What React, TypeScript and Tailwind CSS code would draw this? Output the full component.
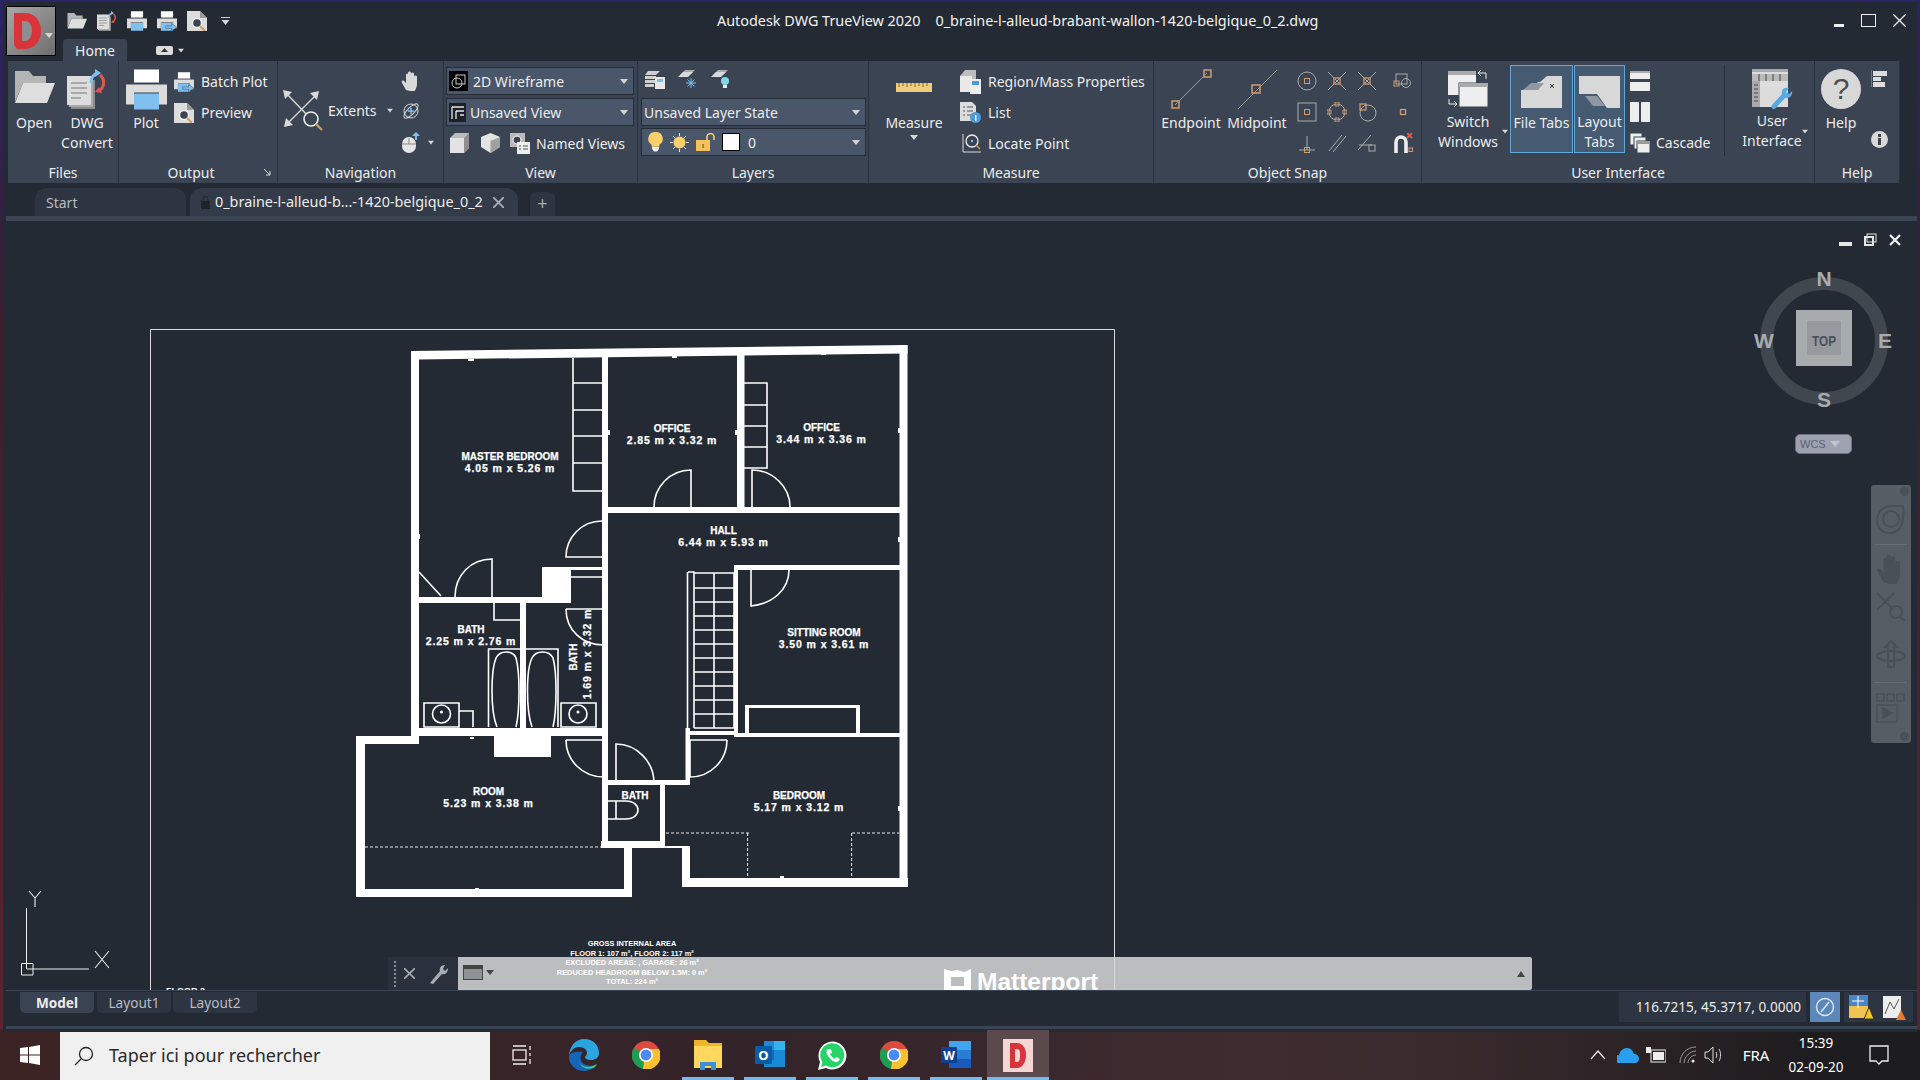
import React from 'react';

const G = '#d9d9d9';
const BL = '#7fc0f0';
const OR = '#d09a70';

const Caret = ({ className = '' }: { className?: string }) => (
  <svg width="8" height="5" viewBox="0 0 8 5" className={className}><path d="M0 0h8L4 5z" fill="#d5d5d5" /></svg>
);

const FolderIcon = ({ s = 41 }: { s?: number }) => (
  <svg width={s} height={s * 0.83} viewBox="0 0 41 34">
    <path d="M1 33V2h14l4 5h13v7H9L1 33z" fill="#b5b5b5" />
    <path d="M9 14h32l-8 20H1z" fill="#dedede" />
  </svg>
);

const PrinterIcon = ({ s = 41, arrow = false }: { s?: number; arrow?: boolean }) => (
  <svg width={s} height={s} viewBox="0 0 41 40">
    <rect x="8" y="0" width="25" height="13" fill="#fff" />
    <path d="M0 15h41v20H33V23H8v12H0z" fill="#dcdcdc" />
    <rect x="8" y="24" width="25" height="16" fill={BL} />
    {arrow && <path d="M18 30h12v-5l11 8-11 7v-5H18z" fill={BL} stroke="#3b4453" />}
  </svg>
);

const ConvertIcon = ({ s = 40 }: { s?: number }) => (
  <svg width={s} height={s} viewBox="0 0 40 40">
    <rect x="4" y="11" width="24" height="29" fill="#8c8c8c" />
    <rect x="2" y="9" width="24" height="29" fill="#aaa" />
    <rect x="0" y="7" width="24" height="29" fill="#dcdcdc" />
    <path d="M4 14h16M4 19h16M4 24h16M4 29h10" stroke="#777" strokeWidth="1.2" />
    <path d="M24 14c0-6 3-9 7-10" stroke={BL} strokeWidth="3" fill="none" />
    <path d="M28 0l6 4-6 4z" fill={BL} />
    <path d="M33 6c5 4 5 12-1 16" stroke="#e2574c" strokeWidth="3" fill="none" />
    <path d="M35 24l-7-1 4-5z" fill="#e2574c" />
  </svg>
);

const PreviewIcon = ({ s = 20 }: { s?: number }) => (
  <svg width={s} height={s} viewBox="0 0 20 20">
    <path d="M0 0h13l7 7v13H0z" fill="#dcdcdc" />
    <path d="M13 0l7 7h-7z" fill="#999" />
    <circle cx="10" cy="12" r="4.5" fill="#3b4453" stroke="#eee" strokeWidth="1.4" />
    <path d="M13 15l5 5" stroke="#d49a55" strokeWidth="2" />
  </svg>
);

const ExtentsIcon = () => (
  <svg width="41" height="41" viewBox="0 0 41 41">
    <path d="M2 2l26 27M35 3L8 30L2 36" stroke={G} strokeWidth="1.4" fill="none" />
    <path d="M0 0l9 2-7 7zM36 1l-2 9-7-7zM1 37l2-9 7 7z" fill={G} />
    <circle cx="28" cy="29" r="7" fill="#3b4453" stroke="#eee" strokeWidth="1.6" />
    <path d="M33 34l6 6" stroke="#d49a55" strokeWidth="2.4" />
  </svg>
);

const HandIcon = ({ c = G, s = 20 }: { c?: string; s?: number }) => (
  <svg width={s} height={s} viewBox="0 0 20 20">
    <path d="M5 19l-4-7c-1-2 1-3 2-2l2 2V4c0-2 2-2 2 0v4-6c0-2 3-2 3 0v6-5c0-2 3-2 3 0v6-3c0-2 3-2 3 0v7c0 4-2 6-3 8z" fill={c} />
  </svg>
);

const OrbitIcon = () => (
  <svg width="20" height="19" viewBox="0 0 20 19" fill="none">
    <circle cx="10" cy="9" r="7" stroke={G} />
    <ellipse cx="10" cy="9" rx="9.5" ry="3.5" stroke={G} transform="rotate(-45 10 9)" />
    <path d="M10 6v6M7 9h6" stroke={BL} strokeWidth="1.5" />
  </svg>
);

const MouseIcon = () => (
  <svg width="20" height="21" viewBox="0 0 20 21">
    <rect x="1" y="5" width="14" height="16" rx="7" fill="#e6e6e6" />
    <path d="M8 6v6M1 12h14" stroke="#888" />
    <path d="M14 8V4h-3l4-4 4 4h-3v4z" fill={BL} />
  </svg>
);

const WireIcon = () => (
  <span className="w-[19px] h-[20px] bg-black flex items-center justify-center">
    <svg width="15" height="15" viewBox="0 0 15 15" fill="none" stroke="#ccc"><rect x="5" y="1" width="9" height="9" /><circle cx="6" cy="9" r="5" /></svg>
  </span>
);

const ViewBoxIcon = () => (
  <span className="w-[17px] h-[19px] bg-[#1d2127] flex items-center justify-center">
    <svg width="13" height="13" viewBox="0 0 13 13" fill="none" stroke="#e6e6e6" strokeWidth="1.3"><path d="M1 1h12M1 1v12M5 5h8M5 5v8M9 9h4" /></svg>
  </span>
);

const CubeIcon = () => (
  <svg width="19" height="20" viewBox="0 0 19 20">
    <path d="M0 5l5-5h14v15l-5 5H0z" fill="#bcbcbc" />
    <rect x="0" y="5" width="14" height="15" fill="#e3e3e3" />
    <path d="M14 5l5-5v15l-5 5z" fill="#8e8e8e" />
  </svg>
);

const Cube2Icon = () => (
  <svg width="19" height="20" viewBox="0 0 19 20">
    <path d="M9.5 0L19 4v10l-9.5 6L0 14V4z" fill="#e3e3e3" />
    <path d="M9.5 8L19 4v10l-9.5 6z" fill="#a0a0a0" />
  </svg>
);

const NamedViewIcon = () => (
  <svg width="20" height="21" viewBox="0 0 20 21">
    <rect x="0" y="0" width="15" height="14" fill="#bbb" />
    <circle cx="7" cy="7" r="4" fill="#3b4453" stroke="#eee" />
    <rect x="7" y="9" width="13" height="12" fill="#eee" />
    <path d="M9 13h2M13 13h5M9 16h2M13 16h5" stroke="#555" />
  </svg>
);

const Sheet = ({ children }: { children?: React.ReactNode }) => (
  <svg width="20" height="19" viewBox="0 0 20 19">
    <path d="M2 5l5-5h10l-5 5z" fill="#aaa" />
    <path d="M0 7l5-5h10l-5 5z" fill="#d9d9d9" />
    {children}
  </svg>
);

const LayerStateIcon = () => (
  <svg width="20" height="19" viewBox="0 0 20 19">
    <path d="M3 1h12l-4 4H0zM0 6h11v3H0zM0 10h11v3H0zM0 14h9v3H0z" fill="#cfcfcf" />
    <rect x="10" y="7" width="10" height="12" fill="#e8e8e8" />
    <rect x="12" y="9" width="6" height="3" fill={BL} />
  </svg>
);

const Bulb = ({ c = '#f8cf6b', s = 15 }: { c?: string; s?: number }) => (
  <svg width={s} height={s * 1.3} viewBox="0 0 15 20">
    <path d="M7.5 0a7 7 0 0 1 4 13v2h-8v-2a7 7 0 0 1 4-13z" fill={c} />
    <path d="M4 15.5h7v2l-2 2.5H6l-2-2.5z" fill="#f2f2f2" />
  </svg>
);

const SunIcon = () => (
  <svg width="19" height="19" viewBox="0 0 19 19">
    <circle cx="9.5" cy="9.5" r="6" fill="#f8cf6b" />
    <path d="M9.5 0v3M9.5 16v3M0 9.5h3M16 9.5h3M3 3l2 2M14 14l2 2M16 3l-2 2M5 14l-2 2" stroke="#eee" />
  </svg>
);

const LockIcon = () => (
  <svg width="19" height="18" viewBox="0 0 19 18">
    <path d="M11 7V4a3.5 3.5 0 0 1 7 0v3" stroke="#f8cf6b" strokeWidth="1.6" fill="none" />
    <rect x="0" y="7" width="14" height="11" fill="#f4c15d" />
    <rect x="6.5" y="11" width="1.2" height="4" fill="#7a5a1d" />
  </svg>
);

const RulerIcon = () => (
  <svg width="36" height="9" viewBox="0 0 36 9">
    <rect width="36" height="9" fill="#f0cd7c" />
    <path d="M3 0v4M7 0v3M11 0v4M15 0v3M19 0v4M23 0v3M27 0v4M31 0v3" stroke="#8a6a2a" />
  </svg>
);

const RegionIcon = () => (
  <svg width="21" height="24" viewBox="0 0 21 24">
    <path d="M0 6l5-6h11v18H0z" fill="#bdbdbd" />
    <rect x="0" y="6" width="12" height="16" fill="#e9e9e9" />
    <rect x="10" y="9" width="11" height="15" fill="#eee" />
    <rect x="12" y="11" width="7" height="4" fill="#4a9bd8" />
  </svg>
);

const ListIcon = () => (
  <svg width="21" height="21" viewBox="0 0 21 21">
    <path d="M0 0h12l4 4v15H0z" fill="#dcdcdc" />
    <path d="M3 5h2M7 5h6M3 9h2M7 9h6M3 13h2M7 13h6" stroke="#555" />
    <circle cx="15.5" cy="15.5" r="5.5" fill="#4a9bd8" />
    <rect x="15" y="13" width="1.4" height="6" fill="#fff" />
  </svg>
);

const LocateIcon = () => (
  <svg width="20" height="21" viewBox="0 0 20 21" fill="none">
    <path d="M2 1v18h18" stroke={G} />
    <circle cx="11" cy="8" r="6" stroke="#eee" strokeWidth="1.3" />
    <rect x="10" y="7" width="2" height="2" fill={BL} />
    <path d="M15 12l4 4" stroke="#d49a55" strokeWidth="1.5" />
  </svg>
);

const SnapLine = ({ mid = false }: { mid?: boolean }) => (
  <svg width="41" height="41" viewBox="0 0 41 41" fill="none">
    <path d={mid ? 'M1 40L40 1' : 'M4 36L36 4'} stroke="#999" />
    {mid ? <rect x="15" y="16" width="8" height="8" stroke={OR} strokeWidth="1.5" /> : <><rect x="1" y="32" width="7" height="7" stroke={OR} strokeWidth="1.5" /><rect x="33" y="1" width="7" height="7" stroke={OR} strokeWidth="1.5" /></>}
  </svg>
);

const snapIcons: React.ReactNode[] = [
  <><circle cx="10" cy="10" r="9" stroke="#aaa" /><rect x="7.5" y="7.5" width="5" height="5" stroke={OR} /></>,
  <><path d="M1 1l18 18M19 1L1 19" stroke="#aaa" /><rect x="7" y="7" width="6" height="6" stroke={OR} strokeWidth="1.3" /></>,
  <><path d="M1 1l18 18M19 1L1 19" stroke="#aaa" /><rect x="7" y="7" width="6" height="6" stroke={OR} strokeWidth="1.3" /></>,
  <><rect x="3" y="3" width="11" height="10" stroke="#aaa" /><circle cx="13" cy="12" r="4.5" stroke="#aaa" /><rect x="1" y="10" width="5" height="5" stroke={OR} /></>,
  <><rect x="1" y="1" width="18" height="18" stroke="#aaa" /><rect x="7.5" y="7.5" width="5" height="5" stroke={OR} /></>,
  <><circle cx="10" cy="10" r="8" stroke="#aaa" /><path d="M8 0h4v4H8zM8 16h4v4H8zM0 8h4v4H0zM16 8h4v4h-4z" stroke={OR} /></>,
  <><circle cx="11" cy="11" r="8" stroke="#aaa" /><rect x="3" y="2" width="6" height="6" stroke={OR} strokeWidth="1.3" /></>,
  <rect x="7.5" y="7.5" width="5" height="5" stroke={OR} strokeWidth="1.3" />,
  <><path d="M10 3v14M2 17h16" stroke="#aaa" /><rect x="7.5" y="14.5" width="5" height="5" stroke={OR} /></>,
  <path d="M2 18L15 2M6 19L19 3" stroke="#aaa" />,
  <><path d="M1 17L14 2M2 12h13" stroke="#aaa" /><rect x="12" y="12" width="6" height="6" stroke="#aaa" /></>,
  <><path d="M3 20V9a5 5 0 0 1 10 0v11" stroke="#eee" strokeWidth="3.6" /><path d="M14 0l5 5M19 0l-5 5" stroke="#e2574c" strokeWidth="2" /><rect x="16" y="15" width="3.500" height="3.500" stroke={OR} /></>,
];

const SwitchIcon = () => (
  <svg width="40" height="38" viewBox="0 0 40 38">
    <rect x="0" y="2" width="28" height="24" fill="#eee" />
    <rect x="0" y="2" width="28" height="4" fill="#aaa" />
    <rect x="11" y="14" width="29" height="24" fill="#eee" stroke="#3b4453" />
    <rect x="11" y="14" width="29" height="4" fill="#aaa" />
    <path d="M38 10V4h-8M33 1l-3 3 3 3M1 30v5h8M6 32l3 3-3 3" stroke="#eee" fill="none" />
  </svg>
);

const FileTabIcon = () => (
  <svg width="41" height="32" viewBox="0 0 41 32">
    <path d="M0 32V14h9l8-8-2-0 0-0h4v0L26 0h15v32z" fill="#d8d8d8" />
    <path d="M2 14l8-7h13l-6 7z" fill="#8f98a3" />
    <path d="M29 8l4 4M33 8l-4 4" stroke="#333" />
  </svg>
);

const LayoutTabIcon = () => (
  <svg width="41" height="32" viewBox="0 0 41 32">
    <path d="M0 0h41v32H28L18 18H0z" fill="#d8d8d8" />
    <path d="M6 20h12l8 10H14z" fill="#8f98a3" />
  </svg>
);

const StackH = () => (
  <svg width="20" height="20" viewBox="0 0 20 20"><rect width="20" height="8" y="0" fill="#eee" /><rect width="20" height="9" y="11" fill="#eee" /><rect width="20" height="2" y="0" fill="#aaa" /></svg>
);
const StackV = () => (
  <svg width="20" height="20" viewBox="0 0 20 20"><rect width="9" height="20" x="0" fill="#eee" /><rect width="9" height="20" x="11" fill="#eee" /></svg>
);
const CascadeIcon = () => (
  <svg width="20" height="20" viewBox="0 0 20 20">
    <rect x="0" y="0" width="12" height="12" fill="#eee" stroke="#3b4453" />
    <rect x="4" y="4" width="12" height="12" fill="#eee" stroke="#3b4453" />
    <rect x="7" y="8" width="13" height="12" fill="#eee" stroke="#3b4453" />
    <rect x="7" y="8" width="13" height="3" fill="#999" />
  </svg>
);

const UiIcon = () => (
  <svg width="41" height="41" viewBox="0 0 41 41">
    <rect x="0" y="0" width="36" height="38" fill="#dcdcdc" />
    <rect x="0" y="0" width="36" height="3" fill="#aaa" />
    <path d="M0 5h36v7H0z" fill="#bbb" />
    <path d="M7 5v7M14 5v7M21 5v7M28 5v7" stroke="#444" />
    <rect x="0" y="12" width="8" height="26" fill="#aaa" />
    <path d="M2 16h4M2 20h4M2 24h4M2 28h4M2 32h4" stroke="#444" />
    <path d="M21 40c-2-1-2-2-1-4l10-11c-1-4 2-7 7-6l-3 4 3 2 3-3c1 5-3 8-7 7L24 39c-1 1-2 1-3 1z" fill="#5aa9e0" />
  </svg>
);

const Col = ({ w, icon, lines, caret = false, ml = 0, h = 44 }: { w: number; icon: React.ReactNode; lines: string[]; caret?: boolean; ml?: number; h?: number }) => (
  <div className="flex flex-col items-center shrink-0 pt-[8px]" style={{ width: w, marginLeft: ml }}>
    <div className="flex items-start justify-center" style={{ height: h }}>{icon}</div>
    {lines.map(l => <div key={l} className="h-[20px] leading-[20px] whitespace-nowrap">{l}</div>)}
    {caret && <Caret className="mt-[2px]" />}
  </div>
);

const Row = ({ icon, label, w = 21, gap = 7 }: { icon: React.ReactNode; label?: string; w?: number; gap?: number }) => (
  <div className="h-[31px] flex items-center whitespace-nowrap" style={{ gap }}>
    <span className="flex justify-center shrink-0" style={{ width: w }}>{icon}</span>
    {label && <span>{label}</span>}
  </div>
);

const Panel = ({ w, title, children, corner = false, titleW }: { w: number; title: string; children: React.ReactNode; corner?: boolean; titleW?: number }) => (
  <div className="flex flex-col shrink-0 border-r border-[#2a313c] relative" style={{ width: w }}>
    <div className="h-[102px] flex">{children}</div>
    <div className="h-[20px] leading-[20px] text-center" style={{ width: titleW }}>{title}</div>
    {corner && <svg width="7" height="7" viewBox="0 0 7 7" className="absolute right-[6px] bottom-[7px]"><path d="M0 0l6 6M6 2v4H2" stroke="#ddd" fill="none" /></svg>}
  </div>
);

const Combo = ({ w, children, mb = 0 }: { w: number; children: React.ReactNode; mb?: number }) => (
  <div className="h-[28px] bg-[#4a5669] border border-[#262c35] flex items-center pl-[2px] pr-[4px] gap-[4px] whitespace-nowrap" style={{ width: w, marginBottom: mb }}>
    {children}
    <Caret className="ml-auto !w-[10px]" />
  </div>
);

function Plan() {
  const rooms: [string, string | null, number, number][] = [
    ['MASTER BEDROOM', '4.05 m x 5.26 m', 510, 456],
    ['OFFICE', '2.85 m x 3.32 m', 672, 428],
    ['OFFICE', '3.44 m x 3.36 m', 821.5, 427],
    ['HALL', '6.44 m x 5.93 m', 723.5, 530],
    ['BATH', '2.25 m x 2.76 m', 471, 629],
    ['SITTING ROOM', '3.50 m x 3.61 m', 824, 632],
    ['ROOM', '5.23 m x 3.38 m', 488.5, 791],
    ['BATH', null, 635, 795],
    ['BEDROOM', '5.17 m x 3.12 m', 799, 795],
  ];
  const walls: [number, number, number, number][] = [
    [411, 351, 8, 390], [356, 736, 63, 8], [356, 736, 9, 161], [356, 889, 276, 8], [624, 841, 8, 56],
    [601, 841, 64, 7], [682, 848, 8, 39], [682, 878, 226, 9], [899.5, 345, 8, 542], [602, 355, 6, 486],
    [737, 355, 7.5, 156], [602, 507, 298, 6], [411, 597, 160, 6], [542, 567, 29, 36], [542, 567, 60, 3],
    [520, 603, 6, 130], [411, 728, 191, 8], [494, 736, 57, 21], [734, 565, 4, 172], [734, 565, 166, 5],
    [734, 733, 166, 4], [685.5, 728, 4.5, 57], [690, 731, 44, 4], [602, 780, 88, 5], [660, 785, 5, 60],
    [745, 705, 115, 3], [745, 705, 4, 29], [856, 705, 4, 29], [665, 846, 25, 2],
    // small ticks on the walls
    [468, 359, 6, 2], [672, 356, 5, 2], [821, 353, 5, 2], [418, 534, 2, 5], [608, 430, 2, 5], [735, 430, 2, 5],
    [898, 428, 2, 5], [898, 537, 2, 5], [470, 737, 4, 2], [475, 888, 4, 2], [780, 876, 4, 2], [898, 806, 2, 5],
  ];
  const lines = [
    'M573 358V491H602', 'M573 383H602M573 410H602M573 436H602M573 463H602',
    'M744 383H767V468H744M744 405H767M744 426H767M744 447H767',
    'M691 507V470C670 470 654 487 654 507', 'M752 507V470C773 470 790 487 790 507',
    'M602 521C582 521 566 537 566 557H602M605 521V557', 'M492 597V559C471 559 455 575 455 597M419 572L441 596',
    'M494 603V620H520', 'M566 609H604V645C582 645 566 630 566 609M604 610V645', 'M571 577H602',
    'M488.5 727V649H520M558 727V649H526', 'M497 727C490 710 491 670 496 658C500 650 513 650 516 658C520 672 520 710 516 727',
    'M532 727C526 710 526 670 532 658C536 650 549 650 553 658C557 672 557 710 553 727',
    'M424 727V703H459V727ZM459 711H473V727', 'M561 727V703H596V727Z',
    'M688 572H694V728M687.5 572V728', 'M694 573H734V728M714 573V728',
    'M751 570V606C772 604 789 590 789 570',
    'M727 740H690V777C711 777 727 760 727 740', 'M566 740H604V777C582 777 566 760 566 740M606 740V777',
    'M616 783V744C637 744 654 762 654 783', 'M608 801H616V819H608M616 801H626C642 801 642 819 626 819H616',
  ];
  return (
    <svg className="absolute inset-0" width="1908" height="769" viewBox="6 221 1908 769" fontFamily="'Liberation Sans', sans-serif">
      <path d="M150.5 990V329.500H1114.500V990" fill="none" stroke="#d8d8d8" />
      <path d="M411 351L907.5 345V353.5L418 359.5Z" fill="#fff" />
      {walls.map(([x, y, w, h], i) => <rect key={i} x={x} y={y} width={w} height={h} fill="#fff" />)}
      <path d={lines.join('')} fill="none" stroke="#fff" strokeWidth="1.6" />
      <path d={Array.from({ length: 11 }, (_, i) => `M694 ${588 + i * 14}H734`).join('')} stroke="#fff" strokeWidth="1.6" />
      <circle cx="441.5" cy="714" r="9" fill="none" stroke="#fff" strokeWidth="1.6" />
      <circle cx="578" cy="714" r="9" fill="none" stroke="#fff" strokeWidth="1.6" />
      <circle cx="441.5" cy="712" r="1.500" fill="#fff" />
      <circle cx="578" cy="712" r="1.500" fill="#fff" />
      <path d="M365 847H601M666 833H749M747.6 833V878M852 833H899M851.6 833V878" stroke="#fff" strokeWidth=".9" strokeDasharray="3 2" fill="none" />
      <g fill="#fff" stroke="#fff" strokeWidth=".25" fontWeight="700" textAnchor="middle">
        {rooms.map(([a, b, x, y], i) => (
          <g key={i}>
            <text x={x} y={y + 4} fontSize="10">{a}</text>
            {b && <text x={x} y={y + 16} fontSize="10.5" letterSpacing=".9">{b}</text>}
          </g>
        ))}
        <text transform="translate(577 657) rotate(-90)" fontSize="10">BATH</text>
        <text transform="translate(591 654) rotate(-90)" fontSize="10.5" letterSpacing=".9">1.69 m x 3.32 m</text>
      </g>
      <g fill="#fff" fontWeight="700" fontSize="7.4" textAnchor="middle">
        <text x="632" y="946">GROSS INTERNAL AREA</text>
        <text x="632" y="955.500">FLOOR 1: 107 m², FLOOR 2: 117 m²</text>
        <text x="632" y="965">EXCLUDED AREAS: , GARAGE: 26 m²</text>
        <text x="632" y="974.500">REDUCED HEADROOM BELOW 1.5M: 0 m²</text>
        <text x="632" y="984">TOTAL: 224 m²</text>
      </g>
      <text x="166" y="994" fill="#fff" fontWeight="700" fontSize="9">FLOOR 2</text>
      <path d="M944 969l7 2 6-1 7 2 7-3v24h-27z" fill="#fff" />
      <rect x="951" y="977" width="13" height="9" fill="#bcbdbe" />
      <text x="977" y="990" fill="#fff" fontWeight="700" fontSize="24.5">Matterport</text>
      <path d="M26.500 908V969H89M21.500 963.500H33V975H21.500Z" stroke="#eee" fill="none" />
      <path d="M29 891l6 7 6-7M35 898v9M95 951l14 17M109 951l-14 17" stroke="#eee" strokeWidth="1.1" fill="none" />
    </svg>
  );
}

const Chrome = () => (
  <svg width="28" height="28" viewBox="0 0 28 28">
    <circle cx="14" cy="14" r="14" fill="#dd4b3e" />
    <path d="M14 14L2 7A14 14 0 0 0 11 28z" fill="#1e9e52" />
    <path d="M14 8h13a14 14 0 0 1-16 20z" fill="#fbc02d" />
    <circle cx="14" cy="14" r="7" fill="#fff" />
    <circle cx="14" cy="14" r="5.4" fill="#4a8af4" />
  </svg>
);

const TaskBtn = ({ children, line = true, active = false }: { children: React.ReactNode; line?: boolean; active?: boolean }) => (
  <div className={`w-[62px] h-full flex items-center justify-center relative ${active ? 'bg-[#5a4a4d]' : ''}`}>
    {children}
    {line && <div className={`absolute bottom-0 h-[3px] bg-[#76b9ed] ${active ? 'inset-x-0' : 'inset-x-[5px]'}`} />}
  </div>
);

export default function App() {
  return (
    <div className="w-[1920px] h-[1080px] overflow-hidden flex flex-col text-[14px] text-[#ececec] bg-[linear-gradient(180deg,#2a2466_0,#2a2466_3px,#3a1f2c_30%,#5a2430_100%)]" style={{ fontFamily: "'Noto Sans', sans-serif" }}>
      <div className="h-[1030px] mt-[2px] -mb-[2px] ml-[3px] mr-[3px] flex flex-col bg-[#232a33] relative">
        {/* title + tabs */}
        <div className="h-[59px] flex shrink-0">
          <div className="w-[60px] pl-[3px] pt-[4px] shrink-0">
            <div className="w-[50px] h-[50px] border border-black bg-[linear-gradient(135deg,#a8a8a8,#6e6e6e)] flex items-center pl-[5px] relative">
              <svg width="30" height="38" viewBox="0 0 30 38"><path d="M2 1h11c10 0 16 8 16 18s-6 18-17 18H5L2 33z" fill="#d8343a" /><path d="M10 9h3c5 0 7 5 7 10s-3 10-7 10h-3z" fill="#8f8f8f" /></svg>
              <Caret className="absolute right-[2px] top-[26px]" />
            </div>
          </div>
          <div className="flex-1 flex flex-col">
            <div className="h-[37px] flex items-center relative">
              <div className="flex items-center gap-[10px] ml-[4px]">
                <FolderIcon s={20} />
                <ConvertIcon s={20} />
                <PrinterIcon s={20} />
                <PrinterIcon s={20} arrow />
                <PreviewIcon />
                <span className="flex flex-col gap-[2px] ml-[4px]"><span className="w-[9px] h-[1px] bg-[#ccc]" /><Caret className="!w-[9px]" /></span>
              </div>
              <div className="ml-[487px] whitespace-nowrap text-[#f2f2f2] text-[14.4px]">Autodesk DWG TrueView 2020&nbsp;&nbsp;&nbsp;&nbsp;0_braine-l-alleud-brabant-wallon-1420-belgique_0_2.dwg</div>
              <div className="ml-auto flex items-center pr-[11px] gap-[17px]">
                <span className="w-[10px] h-[3px] bg-[#eee] mt-[9px]" />
                <span className="w-[15px] h-[13px] border border-[#eee]" />
                <svg width="13" height="13" viewBox="0 0 13 13"><path d="M0 0l13 13M13 0L0 13" stroke="#eee" strokeWidth="1.3" /></svg>
              </div>
            </div>
            <div className="h-[22px] flex items-center">
              <div className="w-[64px] h-[22px] bg-[#3b4453] rounded-t-[3px] text-center leading-[24px]">Home</div>
              <div className="ml-[29px] w-[17px] h-[9px] bg-[#dcdcdc] rounded-[2px] flex items-center justify-center"><svg width="7" height="4" viewBox="0 0 7 4"><path d="M0 4l3.500-4 3.500 4z" fill="#333" /></svg></div>
              <Caret className="ml-[5px] !w-[6px]" />
            </div>
          </div>
        </div>
        {/* ribbon */}
        <div className="h-[122px] shrink-0 ml-[5px] w-[1892px] bg-[#3b4453] flex text-[14px]">
          <Panel w={111} title="Files" titleW={110}>
            <Col w={52} icon={<FolderIcon />} lines={['Open']} />
            <Col w={50} ml={2} icon={<ConvertIcon />} lines={['DWG', 'Convert']} />
          </Panel>
          <Panel w={159} title="Output" corner titleW={144}>
            <Col w={48} ml={3} icon={<PrinterIcon />} lines={['Plot']} />
            <div className="pt-[5px] ml-[3px]">
              <Row icon={<PrinterIcon s={20} arrow />} label="Batch Plot" />
              <Row icon={<PreviewIcon />} label="Preview" />
            </div>
          </Panel>
          <Panel w={166} title="Navigation">
            <div className="flex items-center ml-[5px] h-[90px] mt-[4px] gap-[4px]">
              <ExtentsIcon />
              <span>Extents</span>
              <Caret className="ml-[6px] !w-[6px]" />
            </div>
            <div className="pt-[4px] ml-[8px]">
              <Row icon={<HandIcon />} w={20} />
              <Row icon={<OrbitIcon />} w={20} />
              <div className="h-[31px] flex items-center gap-[7px]"><MouseIcon /><Caret className="!w-[6px]" /></div>
            </div>
          </Panel>
          <Panel w={194} title="View">
            <div className="pl-[2px] pt-[6px]">
              <Combo w={188} mb={3}><WireIcon /><span className="ml-[1px]">2D Wireframe</span></Combo>
              <Combo w={188} mb={3}><ViewBoxIcon /><span>Unsaved View</span></Combo>
              <div className="flex items-center h-[28px] pl-[4px] gap-[12px]">
                <CubeIcon /><Cube2Icon />
                <span className="flex items-center gap-[6px] -ml-[2px]"><NamedViewIcon />Named Views</span>
              </div>
            </div>
          </Panel>
          <Panel w={231} title="Layers">
            <div className="pl-[3px] pt-[9px]">
              <div className="h-[28px] flex items-start gap-[13px] pl-[4px]">
                <LayerStateIcon />
                <Sheet><path d="M13 8v10M8 13h10M9.500 9.500l7 7M16.500 9.500l-7 7" stroke={BL} /></Sheet>
                <Sheet><circle cx="14" cy="11" r="4" fill="#7fd8e6" /><rect x="12" y="15" width="4" height="3" fill="#eee" /></Sheet>
              </div>
              <Combo w={225} mb={2}><span>Unsaved Layer State</span></Combo>
              <Combo w={225}>
                <span className="ml-[4px] flex items-center gap-[7px]"><Bulb /><SunIcon /><LockIcon /><span className="w-[18px] h-[18px] bg-white border border-black" /><span className="ml-[1px]">0</span></span>
              </Combo>
            </div>
          </Panel>
          <Panel w={285} title="Measure">
            <Col w={70} ml={10} icon={<div className="pt-[14px]"><RulerIcon /></div>} lines={['Measure']} caret />
            <div className="pt-[5px] ml-[11px]">
              <Row icon={<RegionIcon />} label="Region/Mass Properties" />
              <Row icon={<ListIcon />} label="List" />
              <Row icon={<LocateIcon />} label="Locate Point" />
            </div>
          </Panel>
          <Panel w={268} title="Object Snap">
            <Col w={66} ml={4} icon={<SnapLine />} lines={['Endpoint']} />
            <Col w={66} icon={<SnapLine mid />} lines={['Midpoint']} />
            <div className="grid grid-cols-[30px_30px_30px_42px] auto-rows-[31px] items-center justify-items-center pt-[4px] ml-[2px]">
              {snapIcons.map((ic, i) => <svg key={i} width="20" height="20" viewBox="0 0 20 20" fill="none">{ic}</svg>)}
            </div>
          </Panel>
          <Panel w={393} title="User Interface">
            <Col w={68} ml={12} h={43} icon={<SwitchIcon />} lines={['Switch', 'Windows']} />
            <Caret className="mt-[68px] !w-[6px]" />
            <div className="w-[63px] ml-[2px] h-[88px] mt-[4px] bg-[#465a72] border border-[#5fa8dc] flex flex-col items-center pt-[10px]">
              <div className="h-[37px]"><FileTabIcon /></div>
              <div className="leading-[20px] whitespace-nowrap">File Tabs</div>
            </div>
            <div className="w-[51px] ml-px h-[88px] mt-[4px] bg-[#465a72] border border-[#5fa8dc] flex flex-col items-center pt-[10px]">
              <div className="h-[37px]"><LayoutTabIcon /></div>
              <div className="leading-[20px] text-center">Layout<br />Tabs</div>
            </div>
            <div className="pt-[4px] ml-[5px] w-[94px]">
              <Row icon={<StackH />} w={20} />
              <Row icon={<StackV />} w={20} />
              <Row icon={<CascadeIcon />} label="Cascade" w={20} gap={6} />
            </div>
            <div className="w-px h-[91px] mt-[4px] bg-[#2a313c]" />
            <Col w={64} ml={15} h={42} icon={<UiIcon />} lines={['User', 'Interface']} />
            <Caret className="mt-[68px] -ml-[2px] !w-[6px]" />
          </Panel>
          <Panel w={85} title="Help">
            <Col w={42} ml={5} icon={
              <svg width="40" height="40" viewBox="0 0 40 40"><circle cx="20" cy="20" r="20" fill="#d8d8d8" /><text x="20" y="30" textAnchor="middle" fontSize="30" fill="#4d4d4d" fontFamily="'Liberation Sans', sans-serif">?</text></svg>
            } lines={['Help']} />
            <div className="ml-[9px] pt-[9px] flex flex-col gap-[44px]">
              <svg width="16" height="17" viewBox="0 0 16 17"><path d="M0 0v17" stroke="#aaa" /><path d="M2 1h14v5H2zM2 7h8v4H2zM2 12h12v5H2z" fill="#ddd" /></svg>
              <svg width="17" height="17" viewBox="0 0 17 17"><circle cx="8.500" cy="8.500" r="8.500" fill="#d8d8d8" /><rect x="7" y="7" width="3" height="7" fill="#444" /><rect x="7" y="3" width="3" height="3" fill="#444" /></svg>
            </div>
          </Panel>
        </div>
        {/* file tabs */}
        <div className="h-[33px] shrink-0 flex items-end pl-[32px] text-[14.4px]">
          <div className="w-[151px] h-[28px] bg-[#2d3542] rounded-t-[12px] flex items-center pl-[11px] text-[14px] text-[#b8bcc2]">Start</div>
          <div className="w-[328px] h-[28px] ml-[4px] bg-[#333b49] rounded-t-[12px] flex items-center pl-[11px] whitespace-nowrap text-[#ececec]">
            <svg width="9" height="13" viewBox="0 0 9 13" className="mr-[5px]"><rect y="5" width="9" height="8" fill="#1f242b" /><path d="M2 5V3a2.500 2.500 0 0 1 5 0v2" stroke="#1f242b" fill="none" /></svg>
            0_braine-l-alleud-b...-1420-belgique_0_2
            <svg width="11" height="11" viewBox="0 0 11 11" className="ml-[10px]"><path d="M0 0l11 11M11 0L0 11" stroke="#a9adb3" strokeWidth="1.9" /></svg>
          </div>
          <div className="w-[25px] h-[24px] ml-[12px] bg-[#2d3542] rounded-t-[6px] flex items-center justify-center text-[#a9adb3] text-[18px] leading-none pb-[3px]">+</div>
        </div>
        <div className="h-[5px] shrink-0 ml-[3px] bg-[#3b4453]" />
        {/* canvas */}
        <div className="h-[769px] shrink-0 ml-[3px] w-[1908px] relative overflow-hidden">
          <div className="absolute left-[452px] top-[736px] w-[1074px] h-[33px] bg-[#bcbdbe] rounded-r-[2px]" />
          <Plan />
          <div className="absolute left-[382px] top-[736px] w-[70px] h-[33px] bg-[#2a313c] flex items-center pl-[5px] gap-[8px]">
            <span className="w-[2px] h-[26px] border-l-2 border-dotted border-[#8a8f96] ml-[1px]" />
            <svg width="11" height="11" viewBox="0 0 11 11"><path d="M0 0l11 11M11 0L0 11" stroke="#a9adb3" strokeWidth="1.6" /></svg>
            <svg width="20" height="20" viewBox="0 0 20 20" className="ml-[5px]"><path d="M2 19L12 7c-1-3 1-6 5-6l-2 4 2 2 3-3c0 5-3 7-6 6L5 20z" fill="#a9adb3" /></svg>
          </div>
          <div className="absolute left-[457px] top-[744px] flex items-center gap-[3px]">
            <span className="w-[20px] h-[15px] bg-[#8f9296] border border-[#444] block border-t-[4px]" />
            <Caret className="[&>path]:fill-[#444]" />
          </div>
          <svg width="8" height="6" viewBox="0 0 8 6" className="absolute left-[1511px] top-[750px]"><path d="M4 0l4 6H0z" fill="#444" /></svg>

          {/* viewport controls */}
          <div className="absolute right-[13px] top-[12px] flex items-center gap-[12px]">
            <span className="w-[13px] h-[4px] bg-[#e6e6e6] mt-[8px]" />
            <svg width="13" height="13" viewBox="0 0 13 13" fill="none" stroke="#e6e6e6"><rect x="3" y="1" width="9" height="8" /><rect x="1" y="4" width="8" height="8" strokeWidth="2" /></svg>
            <svg width="12" height="12" viewBox="0 0 12 12"><path d="M1 1l10 10M11 1L1 11" stroke="#eee" strokeWidth="2.2" /></svg>
          </div>
          <svg width="140" height="146" viewBox="0 0 140 146" className="absolute left-[1748px] top-[47px]" fontFamily="'Liberation Sans', sans-serif" fontWeight="700" textAnchor="middle">
            <circle cx="70" cy="73" r="57.500" fill="none" stroke="#40474f" strokeWidth="13" />
            <rect x="42" y="42" width="56" height="56" fill="#a8abae" />
            <rect x="53" y="53" width="34" height="34" fill="#969a9e" />
            <text x="70" y="78" fontSize="14" fill="#4b5159" textLength="24" lengthAdjust="spacingAndGlyphs">TOP</text>
            <g fill="#a9acaf" fontSize="21">
              <text x="70" y="18">N</text>
              <text x="70" y="139">S</text>
              <text x="10" y="80">W</text>
              <text x="131" y="80">E</text>
            </g>
          </svg>
          <div className="absolute left-[1789px] top-[213px] w-[57px] h-[20px] bg-[#9ea1b0] border border-[#70747e] rounded-[5px] flex items-center pl-[4px] gap-[4px] text-[11px] text-[#5d6270]" style={{ fontFamily: "'Liberation Sans', sans-serif" }}>
            WCS
            <svg width="10" height="6" viewBox="0 0 10 6"><path d="M0 0h10L5 6z" fill="#c2c4cc" /></svg>
          </div>
          <div className="absolute left-[1865px] top-[264px] w-[40px] h-[258px] bg-[#565d64] rounded-[3px] flex flex-col items-center pt-[20px]">
            <span className="absolute top-[2px] right-[2px] w-[9px] h-[9px] rounded-full bg-[#4a5058]" />
            <svg width="30" height="30" viewBox="0 0 30 30" fill="none" stroke="#4a5058" strokeWidth="2"><path d="M15 1h12c1 9 1 16-3 22-5 6-14 7-19 2C0 20 0 12 4 6c3-3 7-5 11-5z" /><circle cx="15" cy="14" r="8" /></svg>
            <span className="absolute top-[59px] left-[4px] right-[4px] h-px bg-[#666d74]" />
            <div className="mt-[19px]"><HandIcon c="#4a5058" s={30} /></div>
            <svg width="30" height="30" viewBox="0 0 30 30" fill="none" stroke="#4a5058" strokeWidth="2" className="mt-[8px]"><path d="M1 1l16 16M18 1L1 18" /><circle cx="20" cy="20" r="6" /><path d="M24 25l5 4" /></svg>
            <svg width="30" height="30" viewBox="0 0 30 30" fill="none" stroke="#4a5058" strokeWidth="2" className="mt-[17px]"><path d="M12 28V8H9l6-6 6 6h-3v20z" /><ellipse cx="15" cy="17" rx="14" ry="5" /></svg>
            <span className="absolute top-[197px] left-[4px] right-[4px] h-px bg-[#666d74]" />
            <svg width="30" height="32" viewBox="0 0 30 32" fill="none" stroke="#4a5058" strokeWidth="1.5" className="mt-[24px]"><rect x="1" y="1" width="7" height="7" /><rect x="11" y="1" width="7" height="7" /><rect x="21" y="1" width="7" height="7" /><rect x="1" y="12" width="20" height="17" /><path d="M7 15l9 5-9 5z" fill="#4a5058" /></svg>
            <span className="absolute bottom-[2px] right-[2px] w-[9px] h-[9px] rounded-full bg-[#4a5058]" />
          </div>
        </div>
        {/* status */}
        <div className="h-[36px] shrink-0 ml-[3px] border-t border-[#3b4453] flex items-start pt-px text-[13.6px]">
          <div className="ml-[14px] w-[74px] h-[21px] bg-[#3a4352] rounded-b-[5px] font-bold text-center leading-[21px] text-[#ececec]">Model</div>
          <div className="ml-[3px] w-[74px] h-[21px] bg-[#2d3542] rounded-b-[5px] text-center leading-[21px] text-[#b8bcc2]">Layout1</div>
          <div className="ml-[2px] w-[84px] h-[21px] bg-[#2d3542] rounded-b-[5px] text-center leading-[21px] text-[#b8bcc2]">Layout2</div>
          <div className="ml-auto mr-[4px] flex gap-[4px] h-[30px]">
            <div className="w-[187px] bg-[#2d3542] flex items-center justify-end pr-[5px] whitespace-nowrap">116.7215, 45.3717, 0.0000</div>
            <div className="w-[30px] bg-[#5c87bb] flex items-center justify-center">
              <svg width="20" height="20" viewBox="0 0 20 20" fill="none" stroke="#dfe9f5" strokeWidth="1.4"><circle cx="10" cy="10" r="8.500" /><path d="M6 15l8-10" /></svg>
            </div>
            <div className="w-[69px] bg-[#2d3542] flex items-center gap-[8px] pl-[4px]">
              <svg width="26" height="26" viewBox="0 0 26 26"><rect x="1" y="1" width="19" height="11" fill="#4a86c5" /><rect x="1" y="12" width="19" height="12" fill="#f0c24f" /><path d="M10 2v12M4 7h12" stroke="#fff" /><path d="M16 25l5-12 5 12z" fill="#f5c518" stroke="#333" /></svg>
              <svg width="24" height="26" viewBox="0 0 24 26"><rect x="1" y="2" width="18" height="22" fill="#eee" /><path d="M3 20L8 8l4 7 5-10" stroke="#555" fill="none" /><path d="M14 26l5-10 5 10z" fill="#e67a2e" /></svg>
            </div>
          </div>
        </div>
        <div className="h-[3px] shrink-0 bg-[#3b4453] ml-[3px]" />
      </div>
      {/* taskbar */}
      <div className="h-[50px] shrink-0 flex items-center text-white bg-[linear-gradient(90deg,#3c2324_0,#33242a_40%,#3f2c31_65%,#3a2a2e_75%,#1d1c1e_95%)]">
        <div className="w-[60px] flex justify-center">
          <svg width="20" height="20" viewBox="0 0 20 20"><path d="M0 3l8-1v7.500H0zM9 2l11-2v9.500H9zM0 10.500h8V18l-8-1zM9 10.500h11V20L9 18z" fill="#fff" /></svg>
        </div>
        <div className="w-[430px] h-full bg-[#f0f0f0] border-t border-[#bbb] flex items-center pl-[14px] gap-[15px] text-[#2a2a2a] text-[18px]">
          <svg width="20" height="20" viewBox="0 0 20 20" fill="none" stroke="#222" strokeWidth="1.3"><circle cx="12" cy="8" r="6.500" /><path d="M7 13L1 19" /></svg>
          Taper ici pour rechercher
        </div>
        <div className="w-[63px] flex justify-center">
          <svg width="20" height="20" viewBox="0 0 20 20" fill="none" stroke="#eee" strokeWidth="1.3"><path d="M1 1h13M1 19h13" /><rect x="1" y="5" width="13" height="10" /><path d="M18 1v4M18 8v3M18 14v5" /></svg>
        </div>
        <div className="flex h-full">
          <TaskBtn line={false}>
            <svg width="30" height="32" viewBox="0 0 30 32"><path d="M15 0c9 0 15 6 15 14 0 5-4 7-8 7-3 0-6-1-6-3 0-1 2-2 2-4 0-4-4-6-8-6-5 0-10 5-10 10C0 8 6 0 15 0z" fill="#2aa5e0" /><path d="M0 18c0 8 7 14 15 14 6 0 11-3 13-7-6 3-14 2-16-4-1-3 0-6 2-8-6-1-14 0-14 5z" fill="#1565b8" /><path d="M10 22c2 6 10 8 18 3l-2 3c-6 3-14 2-16-6z" fill="#3fd07a" /></svg>
          </TaskBtn>
          <TaskBtn line={false}><Chrome /></TaskBtn>
          <TaskBtn>
            <svg width="28" height="30" viewBox="0 0 28 30"><path d="M0 0h12l3 3h13v25H0z" fill="#f0b429" /><path d="M0 6h28v22H0z" fill="#ffd75e" /><path d="M6 22h16v8h-5v-4h-6v4H6z" fill="#3d8fd8" /></svg>
          </TaskBtn>
          <TaskBtn>
            <svg width="30" height="32" viewBox="0 0 30 32"><rect x="9" y="2" width="21" height="26" fill="#1a8ad4" /><rect x="19" y="2" width="11" height="9" fill="#35b1ee" /><rect x="9" y="11" width="10" height="10" fill="#0f6cbd" /><rect x="0" y="7" width="17" height="18" rx="1" fill="#0a5ba8" /><text x="8.500" y="21" fontSize="13" fontWeight="700" textAnchor="middle" fill="#fff">O</text></svg>
          </TaskBtn>
          <TaskBtn>
            <svg width="29" height="29" viewBox="0 0 29 29"><path d="M0 29l2-8A14 14 0 1 1 8 27z" fill="#fff" /><path d="M3 26l1.300-5A12 12 0 1 1 8 24.500z" fill="#25d366" /><path d="M10 8c-2 1-2 4 0 7s6 7 9 6 3-3 2-4l-3-1-1 2c-2-1-4-3-5-5l2-1-1-4z" fill="#fff" /></svg>
          </TaskBtn>
          <TaskBtn><Chrome /></TaskBtn>
          <TaskBtn>
            <svg width="30" height="32" viewBox="0 0 30 32"><rect x="8" y="2" width="22" height="9" fill="#41a5ee" /><rect x="8" y="11" width="22" height="9" fill="#2b7cd3" /><rect x="8" y="20" width="22" height="9" fill="#185abd" /><rect x="0" y="8" width="16" height="16" rx="1" fill="#103f91" /><text x="8" y="20.500" fontSize="12" fontWeight="700" textAnchor="middle" fill="#fff">W</text></svg>
          </TaskBtn>
          <TaskBtn active>
            <span className="w-[30px] h-[33px] bg-[#f5d6d3] flex items-center justify-center">
              <svg width="18" height="27" viewBox="0 0 18 27"><path d="M1 1h7c6 0 9 6 9 12s-3 13-9 13H1z" fill="#d8343a" /><path d="M6 7h2c3 0 3 3 3 6s0 7-3 7H6z" fill="#f5d6d3" /></svg>
            </span>
          </TaskBtn>
        </div>
        <div className="ml-auto flex items-center h-full relative text-[13.500px]">
          <svg width="16" height="10" viewBox="0 0 16 10" fill="none" stroke="#eee" strokeWidth="1.2"><path d="M1 9l7-8 7 8" /></svg>
          <svg width="22" height="15" viewBox="0 0 22 15" className="ml-[11px]"><path d="M2 15a4 4 0 0 1 0-8c1-4 4-7 8-7s6 3 7 6c3 0 5 2 5 5 0 2-2 4-4 4z" fill="#2a9ff0" /></svg>
          <svg width="20" height="16" viewBox="0 0 20 16" className="ml-[7px]"><rect x="5" y="3" width="15" height="12" fill="none" stroke="#eee" /><rect x="7" y="5" width="11" height="8" fill="#eee" /><rect x="0" y="0" width="5" height="6" fill="#eee" /></svg>
          <svg width="18" height="18" viewBox="0 0 18 18" fill="none" stroke="#999" className="ml-[13px]"><path d="M1 17C1 8 8 1 17 1M5 17c0-6 6-12 12-12M9 17c0-4 4-8 8-8" /><circle cx="14" cy="15" r="1.500" fill="#eee" stroke="none" /></svg>
          <svg width="20" height="22" viewBox="0 0 20 22" fill="none" stroke="#ddd" className="ml-[7px]"><path d="M1 8h3l5-5v16l-5-5H1zM12 8c1 1 1 5 0 6M15 5c2 3 2 9 0 12" /></svg>
          <span className="ml-[17px] w-[30px] text-center text-[15px]">FRA</span>
          <div className="ml-[7px] w-[76px] text-center text-[13.500px] leading-[24px]">15:39<br />02-09-20</div>
          <svg width="20" height="20" viewBox="0 0 20 20" fill="none" stroke="#eee" strokeWidth="1.3" className="ml-[15px] mr-[31px]"><path d="M1 1h18v15h-6l-3 3-3-3H1z" /></svg>
        </div>
      </div>
    </div>
  );
}
